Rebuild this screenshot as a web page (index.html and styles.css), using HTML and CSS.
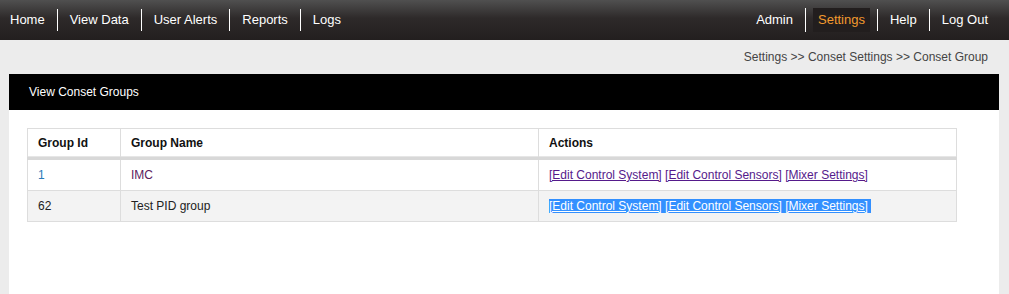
FILE: index.html
```html
<!DOCTYPE html>
<html>
<head>
<meta charset="utf-8">
<link rel="stylesheet" href="styles.css">
</head>
<body>
<nav class="topnav">
  <ul class="menu">
    <li class="item first">Home</li>
    <li class="item">View Data</li>
    <li class="item">User Alerts</li>
    <li class="item">Reports</li>
    <li class="item">Logs</li>
  </ul>
  <ul class="menu right">
    <li class="item">Admin</li>
    <li class="item active"><span class="abox">Settings</span></li>
    <li class="item">Help</li>
    <li class="item last">Log Out</li>
  </ul>
</nav>
<div class="crumbs">Settings &gt;&gt; Conset Settings &gt;&gt; Conset Group</div>
<section class="panel">
  <div class="panel-head">View Conset Groups</div>
  <div class="panel-body">
    <table class="grid">
      <thead>
        <tr><th class="c1">Group Id</th><th class="c2">Group Name</th><th class="c3">Actions</th></tr>
      </thead>
      <tbody>
        <tr>
          <td><span class="idlink">1</span></td>
          <td><span class="namelink">IMC</span></td>
          <td><a class="act">[Edit Control System]</a> <a class="act">[Edit Control Sensors]</a> <a class="act">[Mixer Settings]</a></td>
        </tr>
        <tr class="alt">
          <td>62</td>
          <td>Test PID group</td>
          <td><span class="sel"><a class="act">[Edit Control System]</a> <a class="act">[Edit Control Sensors]</a> <a class="act">[Mixer Settings]</a> </span></td>
        </tr>
      </tbody>
    </table>
  </div>
</section>
</body>
</html>
```
FILE: styles.css
```css
html, body {
  margin: 0;
  padding: 0;
}
body {
  background: #ececec;
  font-family: "Liberation Sans", Arial, sans-serif;
  color: #222;
  width: 1009px;
  height: 294px;
  overflow: hidden;
}
.topnav {
  height: 40px;
  background: linear-gradient(to bottom, #505050 0%, #2e2a2a 45%, #231f1f 100%);
  display: flex;
  justify-content: space-between;
  align-items: center;
}
.menu {
  list-style: none;
  margin: 0;
  padding: 0;
  display: flex;
  align-items: center;
}
.menu.right {
  padding-right: 9px;
}
.item {
  color: #fff;
  font-size: 13px;
  padding: 0 12px;
  line-height: 22px;
  border-left: 1px solid #fff;
}
.item.first {
  border-left: none;
  padding-left: 10px;
}
.menu.right .item:first-child {
  border-left: none;
}
.item.active {
  color: #f39a2e;
  padding: 0 7px;
}
.abox {
  display: block;
  background: #221e1e;
  padding: 0 5px;
  line-height: 24px;
}
.crumbs {
  text-align: right;
  font-size: 12px;
  color: #444;
  padding: 10px 21px 0 0;
  height: 24px;
  line-height: 14px;
}
.panel {
  margin: 0 10px 0 9px;
  background: #fff;
  height: 230px;
}
.panel-head {
  background: #000;
  color: #fff;
  font-size: 12px;
  height: 36px;
  line-height: 36px;
  padding-left: 20px;
}
.panel-body {
  padding: 18px 41px 0 18px;
}
.grid {
  border-collapse: collapse;
  width: 930px;
  font-size: 12px;
  border: 1px solid #ddd;
}
.grid th {
  text-align: left;
  font-weight: bold;
  color: #111;
  height: 28px;
  padding: 0 10px;
  border-left: 1px solid #ddd;
  border-bottom: 3px solid #d8d8d8;
  box-shadow: inset 0 -1px 0 #e6e6e6;
}
.grid th.c1 { width: 72px; }
.grid th.c2 { width: 397px; }
.grid td {
  height: 30px;
  padding: 0 10px;
  border-left: 1px solid #ddd;
  border-top: 1px solid #ddd;
  color: #222;
}
.grid tr.alt td {
  background: #f3f3f3;
}
.idlink {
  color: #2a7ab8;
}
.namelink {
  color: #5b1a5e;
}
.act {
  color: #551a8b;
  text-decoration: underline;
}
.sel {
  background: #3390ff;
  padding-right: 3px;
}
.sel .act {
  color: #fff;
}
```
